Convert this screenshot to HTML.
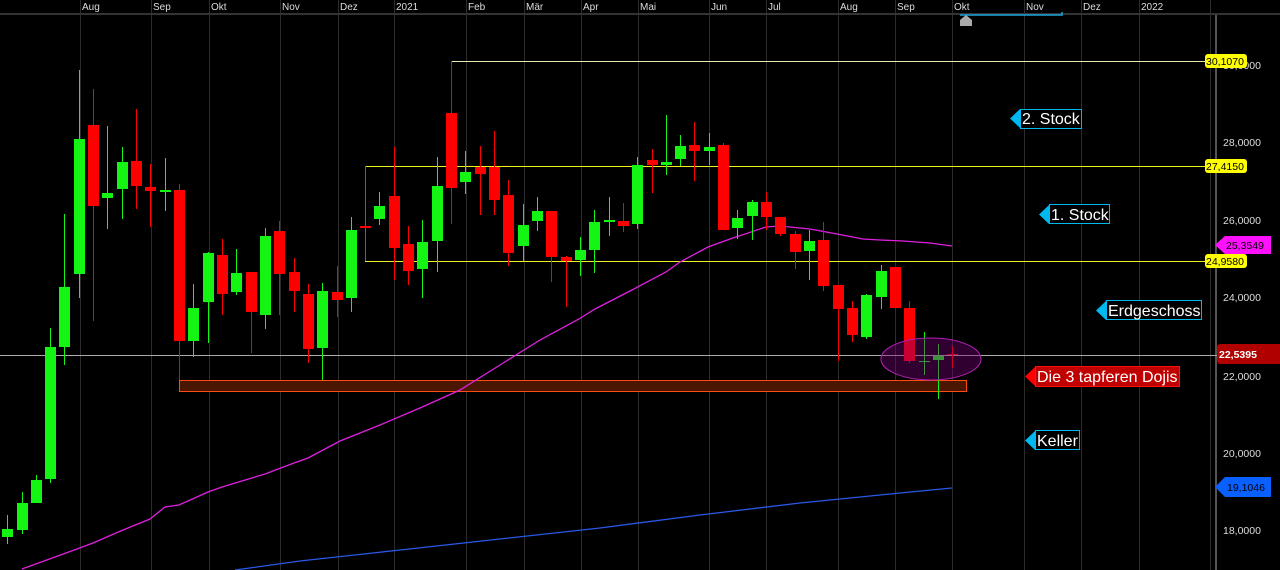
<!DOCTYPE html>
<html><head><meta charset="utf-8"><style>
html,body{margin:0;padding:0;background:#000;width:1280px;height:570px;overflow:hidden}
svg{display:block}
text{font-family:"Liberation Sans",Arial,sans-serif}
</style></head><body>
<svg width="1280" height="570" viewBox="0 0 1280 570" xmlns="http://www.w3.org/2000/svg">
<rect width="1280" height="570" fill="#000"/>
<!-- grid -->
<g stroke="#2c2c2c" stroke-width="1">
<line x1="80.5" y1="0" x2="80.5" y2="570"/><line x1="151.5" y1="0" x2="151.5" y2="570"/><line x1="209.5" y1="0" x2="209.5" y2="570"/><line x1="280.5" y1="0" x2="280.5" y2="570"/><line x1="338.5" y1="0" x2="338.5" y2="570"/><line x1="394.5" y1="0" x2="394.5" y2="570"/><line x1="466.5" y1="0" x2="466.5" y2="570"/><line x1="524.5" y1="0" x2="524.5" y2="570"/><line x1="581.5" y1="0" x2="581.5" y2="570"/><line x1="638.5" y1="0" x2="638.5" y2="570"/><line x1="709.5" y1="0" x2="709.5" y2="570"/><line x1="766.5" y1="0" x2="766.5" y2="570"/><line x1="838.5" y1="0" x2="838.5" y2="570"/><line x1="895.5" y1="0" x2="895.5" y2="570"/><line x1="952.5" y1="0" x2="952.5" y2="570"/><line x1="1024.5" y1="0" x2="1024.5" y2="570"/><line x1="1081.5" y1="0" x2="1081.5" y2="570"/><line x1="1139.5" y1="0" x2="1139.5" y2="570"/><line x1="1210.5" y1="0" x2="1210.5" y2="570"/>
</g>
<line x1="1216" y1="14" x2="1216" y2="570" stroke="#555" stroke-width="2"/>
<rect x="0" y="13" width="1280" height="2" fill="#333"/>
<g fill="#ddd" font-size="10">
<text x="82" y="10">Aug</text><text x="153" y="10">Sep</text><text x="211" y="10">Okt</text><text x="282" y="10">Nov</text><text x="340" y="10">Dez</text><text x="396" y="10">2021</text><text x="468" y="10">Feb</text><text x="526" y="10">Mär</text><text x="583" y="10">Apr</text><text x="640" y="10">Mai</text><text x="711" y="10">Jun</text><text x="768" y="10">Jul</text><text x="840" y="10">Aug</text><text x="897" y="10">Sep</text><text x="954" y="10">Okt</text><text x="1026" y="10">Nov</text><text x="1083" y="10">Dez</text><text x="1141" y="10">2022</text>
</g>
<polyline points="960,15 1062,15 1062,12" fill="none" stroke="#1aa8e0" stroke-width="1.5"/>
<path d="M960,20 L966,15 L972,20 L972,26 L960,26 Z" fill="#aaa"/>
<!-- axis labels -->
<g fill="#ddd" font-size="10.5">
<text x="1223" y="69">30,0000</text><text x="1223" y="146">28,0000</text><text x="1223" y="224">26,0000</text><text x="1223" y="301">24,0000</text><text x="1223" y="380">22,0000</text><text x="1223" y="457">20,0000</text><text x="1223" y="534">18,0000</text>
</g>
<!-- orange box -->
<rect x="179.5" y="380.5" width="787" height="11" fill="#4a1600" stroke="#ff4a10" stroke-width="1"/>
<!-- yellow levels -->
<g stroke="#f0f020" stroke-width="1">
<line x1="451" y1="61.5" x2="1206" y2="61.5" stroke="#e8e8b0"/>
<line x1="365" y1="166.5" x2="1206" y2="166.5"/>
<line x1="365" y1="261.5" x2="1206" y2="261.5"/>
</g>
<line x1="451.5" y1="61" x2="451.5" y2="113" stroke="#bbb"/>
<line x1="365.5" y1="166" x2="365.5" y2="261" stroke="#ff2020"/>
<!-- price line -->
<line x1="0" y1="355.5" x2="1217" y2="355.5" stroke="#aaa" stroke-width="1"/>
<!-- MAs -->
<polyline points="22,569 77,549 93,543 123,530 150,519 165,507 179,505 208,492 222,487 265,474 294,463 308,458 340,441 380,425 420,408 460,390 500,365 540,340 579,319 595,309 630,291 666,272 680,262 708,247 730,239 766,227 780,226 810,229 837,234 863,239 880,240 903,241 930,243 952,246" fill="none" stroke="#e020e0" stroke-width="1.3"/>
<polyline points="235,570 300,561 400,550 500,539 600,528 700,515 800,503 900,493 952,488" fill="none" stroke="#2a58e8" stroke-width="1.3"/>
<!-- candles -->
<g id="c" stroke-width="1">
<g stroke="#14f514" fill="#14f514">
<line x1="7.5" y1="515" x2="7.5" y2="544"/><rect x="2" y="529" width="11" height="8" stroke="none"/>
<line x1="22.5" y1="492" x2="22.5" y2="534"/><rect x="17" y="503" width="11" height="27" stroke="none"/>
<line x1="36.5" y1="475" x2="36.5" y2="503"/><rect x="31" y="480" width="11" height="23" stroke="none"/>
<line x1="50.5" y1="328" x2="50.5" y2="483"/><rect x="45" y="347" width="11" height="132" stroke="none"/>
<line x1="64.5" y1="214" x2="64.5" y2="365"/><rect x="59" y="287" width="11" height="60" stroke="none"/>
<line x1="79.5" y1="70" x2="79.5" y2="298"/><rect x="74" y="139" width="11" height="135" stroke="none"/>
<line x1="107.5" y1="126" x2="107.5" y2="229"/><rect x="102" y="193" width="11" height="5" stroke="none"/>
<line x1="122.5" y1="147" x2="122.5" y2="219"/><rect x="117" y="162" width="11" height="27" stroke="none"/>
<line x1="165.5" y1="158" x2="165.5" y2="211"/><rect x="160" y="190" width="11" height="2" stroke="none"/>
<line x1="193.5" y1="284" x2="193.5" y2="357"/><rect x="188" y="308" width="11" height="33" stroke="none"/>
<line x1="208.5" y1="252" x2="208.5" y2="343"/><rect x="203" y="253" width="11" height="49" stroke="none"/>
<line x1="236.5" y1="249" x2="236.5" y2="295"/><rect x="231" y="273" width="11" height="19" stroke="none"/>
<line x1="265.5" y1="228" x2="265.5" y2="329"/><rect x="260" y="236" width="11" height="79" stroke="none"/>
<line x1="322.5" y1="283" x2="322.5" y2="380"/><rect x="317" y="291" width="11" height="57" stroke="none"/>
<line x1="351.5" y1="217" x2="351.5" y2="312"/><rect x="346" y="230" width="11" height="68" stroke="none"/>
<line x1="379.5" y1="192" x2="379.5" y2="225"/><rect x="374" y="206" width="11" height="13" stroke="none"/>
<line x1="422.5" y1="220" x2="422.5" y2="298"/><rect x="417" y="242" width="11" height="27" stroke="none"/>
<line x1="437.5" y1="157" x2="437.5" y2="272"/><rect x="432" y="186" width="11" height="55" stroke="none"/>
<line x1="465.5" y1="151" x2="465.5" y2="194"/><rect x="460" y="172" width="11" height="10" stroke="none"/>
<line x1="523.5" y1="204" x2="523.5" y2="261"/><rect x="518" y="225" width="11" height="21" stroke="none"/>
<line x1="537.5" y1="197" x2="537.5" y2="231"/><rect x="532" y="211" width="11" height="10" stroke="none"/>
<line x1="580.5" y1="237" x2="580.5" y2="276"/><rect x="575" y="250" width="11" height="10" stroke="none"/>
<line x1="594.5" y1="210" x2="594.5" y2="273"/><rect x="589" y="222" width="11" height="28" stroke="none"/>
<line x1="609.5" y1="197" x2="609.5" y2="236"/><rect x="604" y="220" width="11" height="2" stroke="none"/>
<line x1="637.5" y1="157" x2="637.5" y2="229"/><rect x="632" y="165" width="11" height="59" stroke="none"/>
<line x1="666.5" y1="115" x2="666.5" y2="175"/><rect x="661" y="162" width="11" height="3" stroke="none"/>
<line x1="680.5" y1="135" x2="680.5" y2="166"/><rect x="675" y="146" width="11" height="13" stroke="none"/>
<line x1="709.5" y1="133" x2="709.5" y2="165"/><rect x="704" y="147" width="11" height="4" stroke="none"/>
<line x1="737.5" y1="210" x2="737.5" y2="239"/><rect x="732" y="218" width="11" height="10" stroke="none"/>
<line x1="752.5" y1="200" x2="752.5" y2="240"/><rect x="747" y="202" width="11" height="14" stroke="none"/>
<line x1="809.5" y1="230" x2="809.5" y2="280"/><rect x="804" y="241" width="11" height="10" stroke="none"/>
<line x1="866.5" y1="294" x2="866.5" y2="339"/><rect x="861" y="295" width="11" height="42" stroke="none"/>
<line x1="881.5" y1="265" x2="881.5" y2="309"/><rect x="876" y="271" width="11" height="26" stroke="none"/>
<line x1="924.5" y1="332" x2="924.5" y2="375"/><rect x="919" y="361" width="11" height="1" stroke="none"/>
<line x1="938.5" y1="344" x2="938.5" y2="399"/><rect x="933" y="356" width="11" height="4" stroke="none"/>
</g>
<g stroke="#ff0000" fill="#ff0000">
<line x1="93.5" y1="89" x2="93.5" y2="321"/><rect x="88" y="125" width="11" height="81" stroke="none"/>
<line x1="136.5" y1="109" x2="136.5" y2="209"/><rect x="131" y="161" width="11" height="25" stroke="none"/>
<line x1="150.5" y1="164" x2="150.5" y2="227"/><rect x="145" y="187" width="11" height="4" stroke="none"/>
<line x1="179.5" y1="184" x2="179.5" y2="380"/><rect x="174" y="190" width="11" height="151" stroke="none"/>
<line x1="222.5" y1="239" x2="222.5" y2="315"/><rect x="217" y="255" width="11" height="39" stroke="none"/>
<line x1="251.5" y1="272" x2="251.5" y2="353"/><rect x="246" y="272" width="11" height="40" stroke="none"/>
<line x1="279.5" y1="221" x2="279.5" y2="315"/><rect x="274" y="231" width="11" height="43" stroke="none"/>
<line x1="294.5" y1="258" x2="294.5" y2="312"/><rect x="289" y="272" width="11" height="19" stroke="none"/>
<line x1="308.5" y1="284" x2="308.5" y2="363"/><rect x="303" y="294" width="11" height="55" stroke="none"/>
<line x1="337.5" y1="266" x2="337.5" y2="317"/><rect x="332" y="292" width="11" height="8" stroke="none"/>
<rect x="360" y="226" width="11" height="2" stroke="none"/>
<line x1="394.5" y1="147" x2="394.5" y2="280"/><rect x="389" y="196" width="11" height="52" stroke="none"/>
<line x1="408.5" y1="226" x2="408.5" y2="285"/><rect x="403" y="244" width="11" height="27" stroke="none"/>
<line x1="451.5" y1="61" x2="451.5" y2="224"/><rect x="446" y="113" width="11" height="75" stroke="none"/>
<line x1="480.5" y1="146" x2="480.5" y2="215"/><rect x="475" y="167" width="11" height="7" stroke="none"/>
<line x1="494.5" y1="131" x2="494.5" y2="215"/><rect x="489" y="167" width="11" height="33" stroke="none"/>
<line x1="508.5" y1="180" x2="508.5" y2="266"/><rect x="503" y="195" width="11" height="58" stroke="none"/>
<line x1="551.5" y1="211" x2="551.5" y2="282"/><rect x="546" y="211" width="11" height="46" stroke="none"/>
<line x1="566.5" y1="256" x2="566.5" y2="307"/><rect x="561" y="257" width="11" height="4" stroke="none"/>
<line x1="623.5" y1="203" x2="623.5" y2="232"/><rect x="618" y="221" width="11" height="5" stroke="none"/>
<line x1="652.5" y1="149" x2="652.5" y2="193"/><rect x="647" y="160" width="11" height="5" stroke="none"/>
<line x1="694.5" y1="122" x2="694.5" y2="181"/><rect x="689" y="145" width="11" height="6" stroke="none"/>
<line x1="723.5" y1="143" x2="723.5" y2="230"/><rect x="718" y="145" width="11" height="85" stroke="none"/>
<line x1="766.5" y1="192" x2="766.5" y2="230"/><rect x="761" y="202" width="11" height="15" stroke="none"/>
<line x1="780.5" y1="217" x2="780.5" y2="236"/><rect x="775" y="217" width="11" height="17" stroke="none"/>
<line x1="795.5" y1="231" x2="795.5" y2="269"/><rect x="790" y="234" width="11" height="18" stroke="none"/>
<line x1="823.5" y1="222" x2="823.5" y2="291"/><rect x="818" y="240" width="11" height="46" stroke="none"/>
<line x1="838.5" y1="285" x2="838.5" y2="361"/><rect x="833" y="285" width="11" height="24" stroke="none"/>
<line x1="852.5" y1="301" x2="852.5" y2="342"/><rect x="847" y="308" width="11" height="27" stroke="none"/>
<rect x="890" y="267" width="11" height="41" stroke="none"/>
<line x1="909.5" y1="301" x2="909.5" y2="363"/><rect x="904" y="308" width="11" height="53" stroke="none"/>
<line x1="952.5" y1="346" x2="952.5" y2="368"/><rect x="947" y="354" width="11" height="1" stroke="none"/>
</g>
</g>
<!-- ellipse -->
<ellipse cx="931" cy="359" rx="50" ry="21" fill="rgba(120,0,120,0.4)" stroke="#b020b0" stroke-width="1"/>
<!-- annotation labels -->
<g font-size="16" fill="#fff">
<path d="M1010,118.5 L1020,109 L1020,128 Z" fill="#00b8f0"/>
<rect x="1020.5" y="109.5" width="61" height="19" fill="#000" stroke="#00b8f0"/>
<text x="1022" y="124">2. Stock</text>
<path d="M1039,214.5 L1049,205 L1049,224 Z" fill="#00b8f0"/>
<rect x="1049.5" y="204.5" width="60" height="19" fill="#000" stroke="#00b8f0"/>
<text x="1051" y="220">1. Stock</text>
<path d="M1096,310.5 L1106,301 L1106,320 Z" fill="#00b8f0"/>
<rect x="1106.5" y="300.5" width="95" height="19" fill="#000" stroke="#00b8f0"/>
<text x="1108" y="316">Erdgeschoss</text>
<path d="M1025,376.5 L1035,367 L1035,386 Z" fill="#ff0000"/>
<rect x="1035.5" y="366.5" width="144" height="20" fill="#c00000" stroke="#ff1010"/>
<text x="1037" y="382">Die 3 tapferen Dojis</text>
<path d="M1025,440.5 L1035,431 L1035,450 Z" fill="#00b8f0"/>
<rect x="1035.5" y="430.5" width="44" height="19" fill="#000" stroke="#00b8f0"/>
<text x="1037" y="446">Keller</text>
</g>
<!-- right tags -->
<g font-size="10.5">
<rect x="1205" y="54" width="42" height="14" rx="3" fill="#ffff00"/><text x="1206" y="65" fill="#000">30,1070</text>
<rect x="1205" y="159" width="42" height="14" rx="3" fill="#ffff00"/><text x="1206" y="170" fill="#000">27,4150</text>
<rect x="1205" y="254" width="42" height="14" rx="3" fill="#ffff00"/><text x="1206" y="265" fill="#000">24,9580</text>
<path d="M1215,245 L1225,236 L1271,236 L1271,254 L1225,254 Z" fill="#ff10ff"/><text x="1226" y="249" fill="#000">25,3549</text>
<path d="M1215,487 L1225,477 L1271,477 L1271,497 L1225,497 Z" fill="#0a60ff"/><text x="1227" y="491" fill="#000">19,1046</text>
<rect x="1217" y="344" width="66" height="20" rx="3" fill="#b00000"/><text x="1219" y="358" fill="#fff" font-weight="bold">22,5395</text>
</g>
</svg>
</body></html>
